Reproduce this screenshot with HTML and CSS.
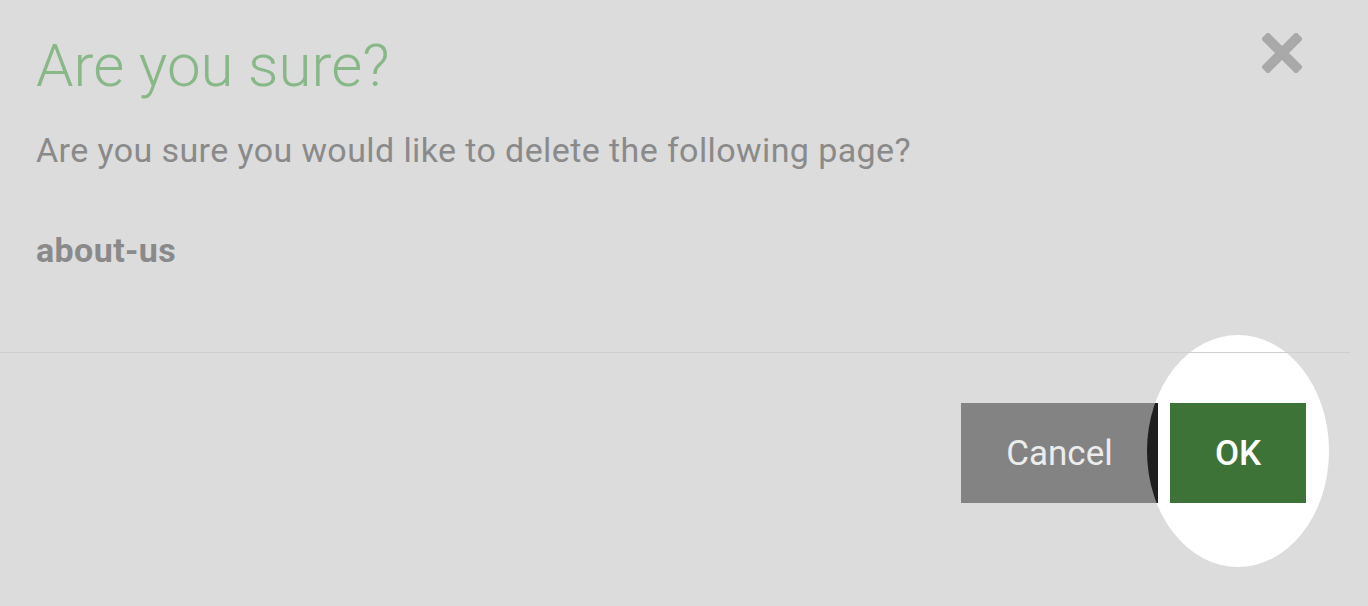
FILE: index.html
```html
<!DOCTYPE html>
<html lang="en">
<head>
<meta charset="utf-8">
<title>Are you sure?</title>
<link rel="stylesheet" href="styles.css">
</head>
<body>
<div class="modal">
  <div class="modal-header">
    <h1 class="modal-title">Are you sure?</h1>
    <button class="close" aria-label="Close">
      <svg width="40" height="40" viewBox="0 0 40 40"><path d="M6 6 L34 34 M34 6 L6 34" stroke="#a9a9a9" stroke-width="10" stroke-linecap="square"/></svg>
    </button>
  </div>
  <div class="modal-body">
    <p class="question">Are you sure you would like to delete the following page?</p>
    <p class="page-name">about-us</p>
  </div>
  <div class="modal-footer">
    <button class="btn btn-cancel">Cancel</button>
    <button class="btn btn-ok">OK</button>
  </div>
</div>
</body>
</html>
```
FILE: styles.css
```css
html {
  margin: 0;
  padding: 0;
  background: #dcdcdc;
}
body {
  margin: 0;
  padding: 0;
  width: 1368px;
  height: 606px;
  overflow: hidden;
  font-family: Roboto, "Liberation Sans", sans-serif;
}
.modal-header {
  display: flex;
  justify-content: space-between;
  align-items: flex-start;
  padding: 36px 66px 0 36px;
}
.modal-title {
  margin: 0;
  font-size: 60px;
  line-height: 60px;
  font-weight: 300;
  color: #89b888;
}
.close {
  margin-top: -3px;
  padding: 0;
  border: 0;
  background: none;
  width: 40px;
  height: 40px;
  display: block;
}
.close svg { display: block; }
.modal-body {
  padding: 34px 36px 82px;
}
.question {
  margin: 0;
  font-size: 34px;
  line-height: 40px;
  letter-spacing: 0.4px;
  color: #8a8a8a;
}
.page-name {
  margin: 60px 0 0;
  font-size: 34px;
  line-height: 40px;
  letter-spacing: 0.4px;
  font-weight: 700;
  color: #8a8a8a;
}
.modal-footer {
  display: flex;
  justify-content: flex-end;
  gap: 12px;
  margin-right: 18px;
  padding: 50px 44px 0 0;
  border-top: 1px solid #cfcfcf;
}
.btn {
  height: 100px;
  border: 0;
  padding: 0;
  font-family: Roboto, "Liberation Sans", sans-serif;
  font-size: 35px;
  cursor: pointer;
}
.btn-cancel {
  position: relative;
  overflow: hidden;
  width: 197px;
  background: #838383;
  color: #ececec;
}
.btn-cancel::after {
  content: "";
  position: absolute;
  left: 186px;
  top: -68px;
  width: 182px;
  height: 232px;
  border-radius: 50%;
  background: #1e1e1e;
}
.btn-ok {
  position: relative;
  width: 136px;
  background: #3d7337;
  color: #ffffff;
  font-weight: 500;
}
.btn-ok::before {
  content: "";
  position: absolute;
  left: -23px;
  top: -68px;
  width: 182px;
  height: 232px;
  border-radius: 50%;
  background: #ffffff;
  z-index: -1;
}
```
